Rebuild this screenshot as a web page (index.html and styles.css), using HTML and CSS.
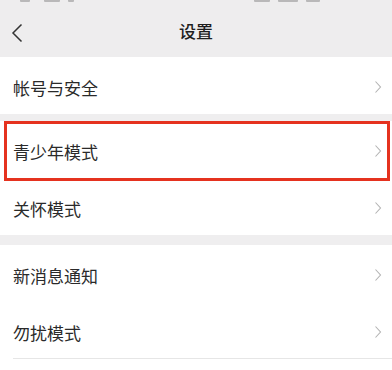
FILE: index.html
```html
<!DOCTYPE html>
<html lang="zh-CN">
<head>
  <meta charset="UTF-8">
  <meta name="viewport" content="width=device-width, initial-scale=1.0">
  <title>设置</title>
  <link rel="stylesheet" href="styles.css">
</head>
<body>
  <div class="header">
    <div class="status">
      <span class="dot d1"></span><span class="dot d2"></span><span class="dot d3"></span>
      <span class="spacer"></span>
      <span class="dot d4"></span><span class="dot d5"></span><span class="dot d6"></span>
    </div>
    <div class="titlebar">
      <a class="back" href="#">
        <svg width="12" height="20" viewBox="0 0 12 20"><path d="M10.5 1.5 L2 10 L10.5 18.5" fill="none" stroke="#333" stroke-width="1.5"/></svg>
      </a>
      <h1>设置</h1>
    </div>
  </div>

  <div class="group">
    <div class="row"><span>帐号与安全</span><svg class="arrow" width="8" height="14" viewBox="0 0 8 14"><path d="M1.5 1.5 L6.5 7 L1.5 12.5" fill="none" stroke="#b3b3b3" stroke-width="1.1"/></svg></div>
  </div>
  <div class="gap"></div>
  <div class="group">
    <div class="row marked"><span>青少年模式</span><svg class="arrow" width="8" height="14" viewBox="0 0 8 14"><path d="M1.5 1.5 L6.5 7 L1.5 12.5" fill="none" stroke="#b3b3b3" stroke-width="1.1"/></svg></div>
    <div class="row"><span>关怀模式</span><svg class="arrow" width="8" height="14" viewBox="0 0 8 14"><path d="M1.5 1.5 L6.5 7 L1.5 12.5" fill="none" stroke="#b3b3b3" stroke-width="1.1"/></svg></div>
  </div>
  <div class="gap"></div>
  <div class="group">
    <div class="row"><span>新消息通知</span><svg class="arrow" width="8" height="14" viewBox="0 0 8 14"><path d="M1.5 1.5 L6.5 7 L1.5 12.5" fill="none" stroke="#b3b3b3" stroke-width="1.1"/></svg></div>
    <div class="row last"><span>勿扰模式</span><svg class="arrow" width="8" height="14" viewBox="0 0 8 14"><path d="M1.5 1.5 L6.5 7 L1.5 12.5" fill="none" stroke="#b3b3b3" stroke-width="1.1"/></svg></div>
  </div>
</body>
</html>
```

FILE: styles.css
```css
body {
  margin: 0;
  padding: 0;
  background: #fff;
  font-family: "Noto Sans CJK SC", "Noto Sans", sans-serif;
  color: #2a2a2a;
}
.header {
  background: #eeedee;
  height: 57px;
}
.status {
  display: flex;
  align-items: flex-start;
  height: 4px;
  padding: 0 20px;
  gap: 8px;
  overflow: hidden;
}
.status .dot {
  display: block;
  height: 2px;
  background: #b9b8b9;
  border-radius: 0 0 1px 1px;
}
.d1 { width: 10px; }
.d2 { width: 16px; margin-left: 6px; }
.d3 { width: 6px; }
.d4 { width: 16px; }
.d5 { width: 20px; }
.d6 { width: 14px; margin-right: 52px; }
.spacer { flex: 1; }
.titlebar {
  position: relative;
  display: flex;
  align-items: center;
  justify-content: center;
  height: 53px;
}
.back {
  position: absolute;
  left: 11px;
  top: 19px;
  display: block;
  line-height: 0;
}
.titlebar h1 {
  margin: 0;
  font-size: 17px;
  font-weight: 500;
  color: #1e1e1e;
}
.gap {
  height: 7px;
  background: #efeeef;
}
.gap + .group + .gap {
  height: 10px;
}
.row {
  position: relative;
  display: flex;
  align-items: center;
  justify-content: space-between;
  height: 57px;
  padding: 0 10px 0 13px;
  font-size: 17px;
}
.row span {
  padding-top: 3px;
}
.row.last::before {
  content: "";
  position: absolute;
  left: 13px;
  right: 0;
  bottom: 0;
  height: 1px;
  background: #e6e6e6;
}
.arrow {
  display: block;
  margin-top: 2px;
}
.marked::after {
  content: "";
  position: absolute;
  left: 4px;
  right: 2px;
  top: 0;
  bottom: -3px;
  border: 3px solid #e5321f;
}
```
